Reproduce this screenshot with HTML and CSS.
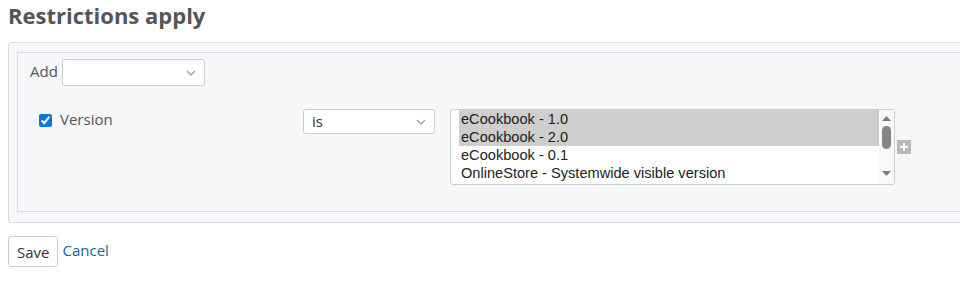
FILE: index.html
```html
<!DOCTYPE html>
<html lang="en">
<head>
  <meta charset="UTF-8">
  <title>Restrictions apply</title>
  <link rel="stylesheet" href="styles.css">
</head>
<body>
  <h2>Restrictions apply</h2>

  <div class="box">
    <div class="filters">
      <div class="add-row">
        <label>Add</label>
        <div class="fake-select add-select">
          <span></span>
          <svg class="chevron" width="10" height="6" viewBox="0 0 10 6"><path d="M1 1l4 4 4-4" fill="none" stroke="#a0a0a0" stroke-width="1.4"/></svg>
        </div>
      </div>

      <div class="filter-row">
        <div class="field">
          <input type="checkbox" checked>
          <span>Version</span>
        </div>
        <div class="operator">
          <div class="fake-select op-select">
            <span>is</span>
            <svg class="chevron" width="10" height="6" viewBox="0 0 10 6"><path d="M1 1l4 4 4-4" fill="none" stroke="#a0a0a0" stroke-width="1.4"/></svg>
          </div>
        </div>
        <div class="values">
          <div class="values-list">
            <div class="options">
              <div class="option selected">eCookbook - 1.0</div>
              <div class="option selected">eCookbook - 2.0</div>
              <div class="option">eCookbook - 0.1</div>
              <div class="option">OnlineStore - Systemwide visible version</div>
            </div>
            <div class="scrollbar">
              <svg width="9" height="5" viewBox="0 0 9 5"><path d="M0 5L4.5 0 9 5z" fill="#7a7a7a"/></svg>
              <div class="thumb"></div>
              <svg class="down" width="9" height="5" viewBox="0 0 9 5"><path d="M0 0L4.5 5 9 0z" fill="#7a7a7a"/></svg>
            </div>
          </div>
          <span class="toggle-multi"></span>
        </div>
      </div>
    </div>
  </div>

  <div class="actions">
    <button>Save</button>
    <a href="#">Cancel</a>
  </div>
</body>
</html>
```

FILE: styles.css
```css
body {
  font-family: "Open Sans", "Liberation Sans", sans-serif;
  font-size: 15px;
  color: #333;
  margin: 0;
  padding: 0 8px;
  overflow: hidden;
  background: #fff;
}
h2 {
  font-size: 22px;
  font-weight: 700;
  color: #555;
  margin: 0 0 11px;
  line-height: 31px;
}
.box {
  width: 1000px;
  background: #f6f7f9;
  border: 1px solid #d7dbe0;
  border-radius: 3px;
  padding: 9px 8px 10px;
}
.filters {
  border: 1px solid #d7dbe0;
  border-right: none;
  padding: 6px 12px 26px;
}
.add-row {
  display: flex;
  align-items: center;
  gap: 4px;
}
.add-row label {
  color: #555;
  margin-top: -3px;
}
.fake-select {
  display: flex;
  align-items: center;
  justify-content: space-between;
  background: #fff;
  border: 1px solid #ccc;
  border-radius: 3px;
  padding: 0 8px;
  box-sizing: border-box;
  color: #333;
}
.add-select {
  width: 143px;
  height: 27px;
}
.op-select {
  width: 132px;
  height: 25px;
}
.op-select span {
  margin-top: -2px;
}
.chevron {
  flex: none;
}
.filter-row {
  display: flex;
  align-items: flex-start;
  margin-top: 23px;
}
.field {
  width: 264px;
  padding-left: 9px;
  display: flex;
  align-items: center;
  gap: 8px;
  color: #555;
  height: 23px;
}
.field span {
  margin-top: -3px;
}
.field input {
  margin: 0;
  width: 13px;
  height: 13px;
  accent-color: #0a74e8;
}
.operator {
  width: 147px;
}
.values {
  display: flex;
  align-items: flex-start;
}
.values-list {
  width: 445px;
  height: 76px;
  box-sizing: border-box;
  display: flex;
  font-family: "Liberation Sans", Arial, sans-serif;
  font-size: 14.6px;
  color: #222;
  background: #fff;
  border: 1px solid #ccc;
  border-radius: 3px;
  padding: 0 0 0 8px;
}
.options {
  flex: 1;
  overflow: hidden;
}
.option {
  height: 18px;
  line-height: 18px;
  padding: 0 2px;
  white-space: nowrap;
}
.option.selected {
  background: #cecece;
}
.scrollbar {
  width: 15px;
  background: #f8f8f8;
  display: flex;
  flex-direction: column;
  align-items: center;
  padding-top: 6px;
}
.thumb {
  width: 9px;
  height: 23px;
  border-radius: 5px;
  background: #858585;
  margin-top: 5px;
}
.scrollbar .down {
  margin-top: auto;
  margin-bottom: 8px;
}
.toggle-multi {
  position: relative;
  display: block;
  flex: none;
  width: 14px;
  height: 14px;
  margin: 31px 0 0 2px;
  background: #b8b8b8;
}
.toggle-multi::before,
.toggle-multi::after {
  content: "";
  position: absolute;
  background: #fff;
}
.toggle-multi::before {
  left: 3px;
  top: 6px;
  width: 8px;
  height: 2px;
}
.toggle-multi::after {
  left: 6px;
  top: 3px;
  width: 2px;
  height: 8px;
}
.actions {
  margin-top: 13px;
  display: flex;
  align-items: center;
  gap: 4px;
}
.actions button {
  font-family: "Open Sans", "Liberation Sans", sans-serif;
  font-size: 15px;
  color: #333;
  background: #fff;
  border: 1px solid #ccc;
  border-radius: 3px;
  height: 31px;
  padding: 0 8px;
}
.actions a {
  color: #169;
  text-decoration: none;
  margin-top: -3px;
}
```
